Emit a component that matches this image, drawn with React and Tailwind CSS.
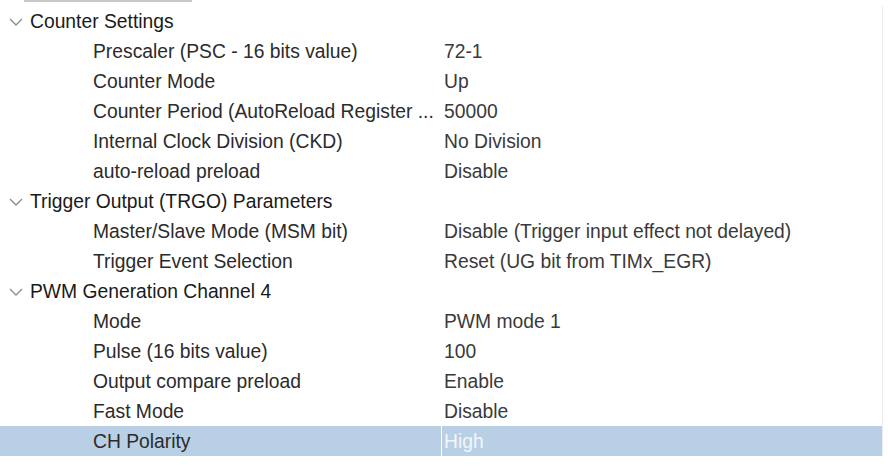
import React from 'react';

const groups = [
  {
    title: 'Counter Settings',
    rows: [
      ['Prescaler (PSC - 16 bits value)', '72-1'],
      ['Counter Mode', 'Up'],
      ['Counter Period (AutoReload Register ...', '50000'],
      ['Internal Clock Division (CKD)', 'No Division'],
      ['auto-reload preload', 'Disable'],
    ],
  },
  {
    title: 'Trigger Output (TRGO) Parameters',
    rows: [
      ['Master/Slave Mode (MSM bit)', 'Disable (Trigger input effect not delayed)'],
      ['Trigger Event Selection', 'Reset (UG bit from TIMx_EGR)'],
    ],
  },
  {
    title: 'PWM Generation Channel 4',
    rows: [
      ['Mode', 'PWM mode 1'],
      ['Pulse (16 bits value)', '100'],
      ['Output compare preload', 'Enable'],
      ['Fast Mode', 'Disable'],
      ['CH Polarity', 'High', true],
    ],
  },
];

const Chevron = () => (
  <svg width="14" height="8" viewBox="0 0 14 8" className="ml-[9px] mr-[7px]">
    <path d="M1 1 L7 7 L13 1" fill="none" stroke="#8a8a8a" strokeWidth="1.3" />
  </svg>
);

const App = () => {
  return (
    <div
      className="w-[888px] h-[466px] bg-white overflow-hidden relative text-[19.3px]"
      style={{ fontFamily: '"Liberation Sans", Arial, sans-serif' }}
    >
      {/* top splitter remnant */}
      <div className="ml-[24px] w-[168px] h-[2px] bg-[#c8c8c8]" />

      <div className="mt-[4px] w-[883px] border-r border-[#ececec]">
        {groups.map((g) => (
          <div key={g.title}>
            <div className="h-[30px] pt-[2px] flex items-center text-[#1a1a1a]">
              <Chevron />
              <span className="leading-none">{g.title}</span>
            </div>
            {g.rows.map(([label, value, selected]) => (
              <div
                key={label}
                className={`h-[30px] flex items-stretch ${selected ? 'bg-[#b9cfe5]' : ''}`}
              >
                <div className="w-[441px] shrink-0 flex items-center pt-[2px] pl-[93px] text-[#2b2b2b] whitespace-nowrap overflow-hidden">
                  {label}
                </div>
                <div
                  className={`flex-1 flex items-center pt-[2px] pl-[2px] whitespace-nowrap ${
                    selected ? 'border-l border-white text-[#f3f6fa]' : 'border-l border-transparent text-[#3a3a3a]'
                  }`}
                >
                  {value}
                </div>
              </div>
            ))}
          </div>
        ))}
      </div>
    </div>
  );
};

export default App;
